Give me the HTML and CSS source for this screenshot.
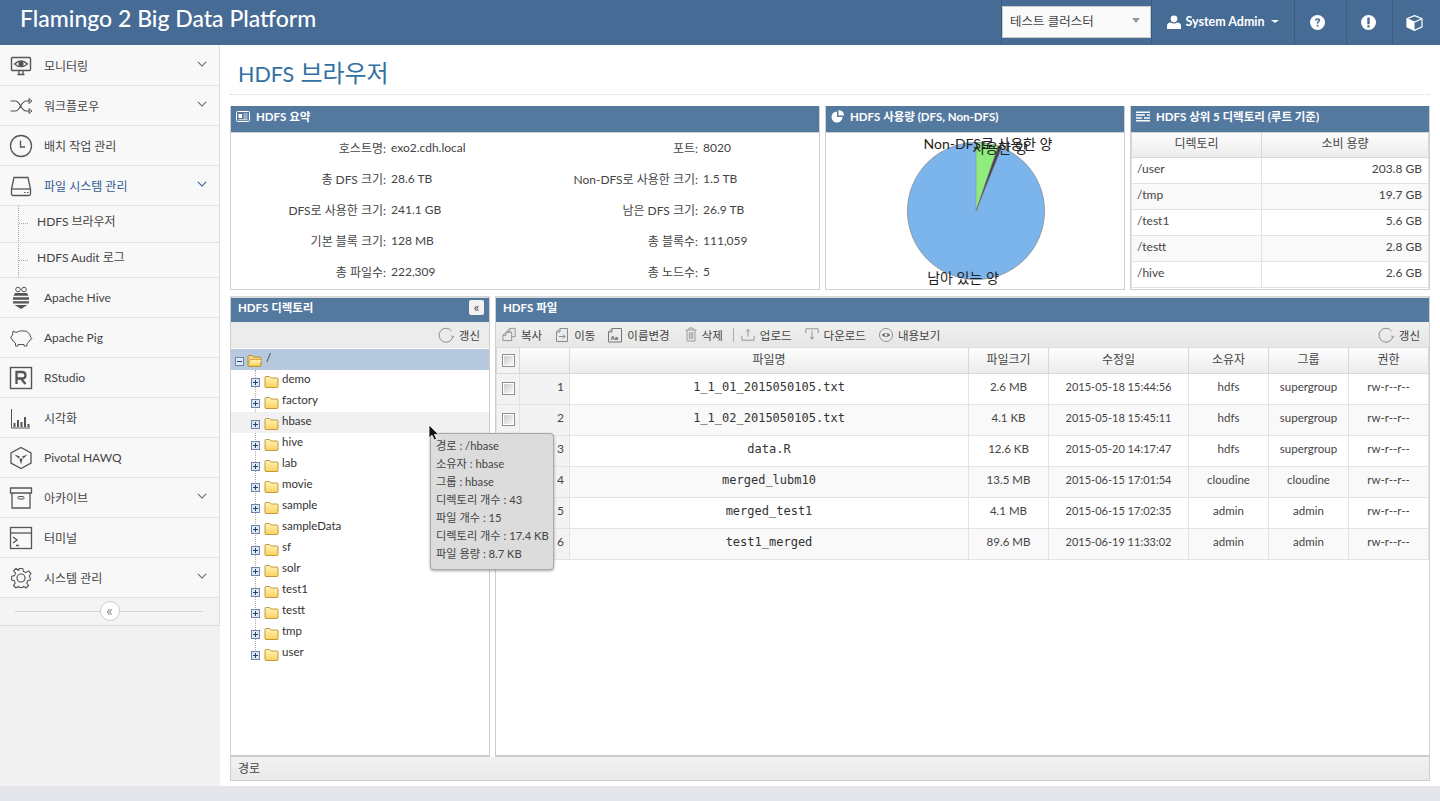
FILE: index.html
```html
<!DOCTYPE html>
<html lang="ko">
<head>
    <meta charset="UTF-8">
    <title>Flamingo 2 Big Data Platform</title>
    <link rel="stylesheet" href="styles.css">
</head>
<body>
    <svg class="sprites" width="0" height="0">
        <defs>
            <linearGradient id="folderFill" x1="0" y1="0" x2="0" y2="1">
                <stop offset="0" stop-color="#fff3b8"/>
                <stop offset="1" stop-color="#fbd35f"/>
            </linearGradient>
            <symbol id="i-folder" viewBox="0 0 15 13">
                <path d="M1 11.5V2.5Q1 1.5 2 1.5H5.5L7 3H13Q14 3 14 4V11.5Q14 12.5 13 12.5H2Q1 12.5 1 11.5Z" fill="url(#folderFill)" stroke="#c09a3c"/>
            </symbol>
            <symbol id="i-open" viewBox="0 0 15 13">
                <path d="M1 11.5V2.5Q1 1.5 2 1.5H5.5L7 3H13Q14 3 14 4V11.5Q14 12.5 13 12.5H2Q1 12.5 1 11.5Z" fill="#f3d27a" stroke="#b58f35"/>
                <path d="M1.2 12L3 5.5H14.5L13 12.2Z" fill="url(#folderFill)" stroke="#c09a3c" stroke-width=".7"/>
            </symbol>
            <symbol id="i-plus" viewBox="0 0 9 9">
                <rect x=".5" y=".5" width="8" height="8" fill="#dfe7f3" stroke="#6f86a8"/>
                <path d="M2 4.5H7M4.5 2V7" stroke="#24406e"/>
            </symbol>
            <symbol id="i-minus" viewBox="0 0 9 9">
                <rect x=".5" y=".5" width="8" height="8" fill="#dfe7f3" stroke="#6f86a8"/>
                <path d="M2 4.5H7" stroke="#24406e"/>
            </symbol>
            <symbol id="i-refresh" viewBox="0 0 16 16">
                <path d="M14.9 9.5A7 7 0 1 1 13.6 4" fill="none" stroke="#8d8d8d"/>
                <path d="M13.2 8.8L14.9 10.4L16 8.6" fill="none" stroke="#8d8d8d"/>
            </symbol>
            <symbol id="i-chevron" viewBox="0 0 12 7">
                <path d="M1 1L6 6L11 1" fill="none" stroke="currentColor" stroke-width="1.3"/>
            </symbol>
        </defs>
    </svg>

    <header class="topbar">
        <div class="brand">Flamingo 2 Big Data Platform</div>
        <div class="top-cell cluster-cell">
            <div class="cluster-select">
                <span>테스트 클러스터</span>
                <i class="caret-grey"></i>
            </div>
        </div>
        <div class="top-cell user-cell">
            <svg width="14" height="14" viewBox="0 0 14 14"><circle cx="7" cy="3.8" r="3.4" fill="#fff"/><path d="M0 14V11Q0 7.6 3.5 7.4Q7 9.6 10.5 7.4Q14 7.6 14 11V14Z" fill="#fff"/></svg>
            <span>System Admin</span>
            <i class="caret-white"></i>
        </div>
        <div class="top-cell icon-cell help-cell">
            <svg width="15" height="15" viewBox="0 0 15 15"><circle cx="7.5" cy="7.5" r="7.5" fill="#fff"/><path d="M4.8 5.6Q5 3.2 7.6 3.2Q10.2 3.3 10.2 5.3Q10.2 6.5 8.9 7.2Q8 7.7 8 8.8H6.8Q6.7 7 7.8 6.3Q8.6 5.8 8.5 5.3Q8.4 4.7 7.6 4.7Q6.6 4.7 6.5 5.8Z" fill="#466b94"/><rect x="6.7" y="9.8" width="1.7" height="1.8" fill="#466b94"/></svg>
        </div>
        <div class="top-cell icon-cell alert-cell">
            <svg width="15" height="15" viewBox="0 0 15 15"><circle cx="7.5" cy="7.5" r="7.5" fill="#fff"/><rect x="6.3" y="2.6" width="2.4" height="6.6" rx=".5" fill="#466b94"/><rect x="6.3" y="10.2" width="2.4" height="2.2" rx=".4" fill="#466b94"/></svg>
        </div>
        <div class="top-cell icon-cell box-cell">
            <svg width="17" height="16" viewBox="0 0 17 16"><path d="M8.5 .6L16 3.6V11.8L8.5 15.4L1 11.8V3.6Z" fill="none" stroke="#fff" stroke-width="1.2"/><path d="M1 3.8L8.5 7L16 3.8" fill="none" stroke="#fff" stroke-width="1.2"/><path d="M1 3.8L8.5 7V15.4L1 11.8Z" fill="#fff"/></svg>
        </div>
    </header>

    <div class="layout">
        <aside class="sidebar">
            <nav class="menu">
                <a class="menu-item">
                    <svg class="menu-icon" width="24" height="22" viewBox="0 0 24 22"><rect x="2.5" y="2.5" width="19" height="13" rx="1" fill="none" stroke="#555" stroke-width="1.4"/><path d="M5.5 9Q12 3 18.5 9Q12 14.5 5.5 9Z" fill="none" stroke="#555" stroke-width="1.2"/><circle cx="12" cy="9" r="2.6" fill="#555"/><path d="M8.5 19.5H15.5M10 16V19.5M14 16V19.5" stroke="#555" stroke-width="1.3"/></svg>
                    <span class="menu-label">모니터링</span>
                    <svg class="menu-arrow" viewBox="0 0 12 7"><use href="#i-chevron"/></svg>
                </a>
                <a class="menu-item">
                    <svg class="menu-icon" width="24" height="22" viewBox="0 0 24 22"><path d="M1.5 6H6.5C11 6 12 16 17 16H21M1.5 16H6.5C11 16 12 6 17 6H21" fill="none" stroke="#555" stroke-width="1.2"/><path d="M20 3.5L23 6L20 8.5ZM20 13.5L23 16L20 18.5Z" fill="none" stroke="#555"/></svg>
                    <span class="menu-label">워크플로우</span>
                    <svg class="menu-arrow" viewBox="0 0 12 7"><use href="#i-chevron"/></svg>
                </a>
                <a class="menu-item">
                    <svg class="menu-icon" width="24" height="24" viewBox="0 0 24 24"><circle cx="12" cy="12" r="10.5" fill="none" stroke="#555" stroke-width="1.3"/><path d="M11.5 6.5V13H16" fill="none" stroke="#555" stroke-width="1.3"/></svg>
                    <span class="menu-label">배치 작업 관리</span>
                </a>
                <a class="menu-item is-open">
                    <svg class="menu-icon" width="24" height="24" viewBox="0 0 24 24"><path d="M2.5 15L5 3.5H19L21.5 15V20Q21.5 21.5 20 21.5H4Q2.5 21.5 2.5 20Z" fill="none" stroke="#555" stroke-width="1.3"/><path d="M2.5 15H21.5" stroke="#555" stroke-width="1.3"/><path d="M15 18.5H16.5M18 18.5H19.5" stroke="#555" stroke-width="1.2"/></svg>
                    <span class="menu-label">파일 시스템 관리</span>
                    <svg class="menu-arrow" viewBox="0 0 12 7"><use href="#i-chevron"/></svg>
                </a>
                <div class="submenu">
                    <a class="submenu-item">HDFS 브라우저</a>
                    <a class="submenu-item">HDFS Audit 로그</a>
                </div>
                <a class="menu-item">
                    <svg class="menu-icon" width="24" height="24" viewBox="0 0 24 24"><circle cx="9" cy="3.5" r="2.3" fill="none" stroke="#555"/><circle cx="15" cy="3.5" r="2.3" fill="none" stroke="#555"/><path d="M6 7H18L20 11V18L12 23L4 18V11Z" fill="#555"/><path d="M4 10.5H20M4 14.5H20M4 18.2H20" stroke="#f7f7f7" stroke-width="1.5"/></svg>
                    <span class="menu-label">Apache Hive</span>
                </a>
                <a class="menu-item">
                    <svg class="menu-icon" width="24" height="22" viewBox="0 0 24 22"><path d="M4 4L7 5.5Q11 3 16 4Q21 5.5 21.5 10L23 11.5L21 13Q20 15.5 18 16.5V19H15V17.5H9V19H6.5V16Q3.5 14.5 3 12L1.5 11L3.5 8Z" fill="none" stroke="#555"/></svg>
                    <span class="menu-label">Apache Pig</span>
                </a>
                <a class="menu-item">
                    <svg class="menu-icon" width="24" height="24" viewBox="0 0 24 24"><rect x="1.5" y="1.5" width="21" height="21" fill="none" stroke="#555" stroke-width="1.4"/><path d="M7.5 18V6H13Q16.5 6 16.5 9.5Q16.5 12.5 13 12.5H7.5M12 12.5L16.5 18" fill="none" stroke="#555" stroke-width="2.3"/></svg>
                    <span class="menu-label">RStudio</span>
                </a>
                <a class="menu-item">
                    <svg class="menu-icon" width="24" height="24" viewBox="0 0 24 24"><path d="M2.5 3V22H21" fill="none" stroke="#555"/><path d="M5.5 21V17M9 21V14M12.5 21V16M16 21V11M19.5 21V18" stroke="#555" stroke-width="2"/></svg>
                    <span class="menu-label">시각화</span>
                </a>
                <a class="menu-item">
                    <svg class="menu-icon" width="24" height="24" viewBox="0 0 24 24"><path d="M12 1.5L22 7V17L12 22.5L2 17V7Z" fill="none" stroke="#555" stroke-width="1.3"/><path d="M5.5 8.5L11 10.5L9.5 12.5ZM18.5 8.5L13 10.5L14.5 12.5ZM10.3 12.5H13.7L12 18.5Z" fill="#555"/></svg>
                    <span class="menu-label">Pivotal HAWQ</span>
                </a>
                <a class="menu-item">
                    <svg class="menu-icon" width="24" height="24" viewBox="0 0 24 24"><path d="M1.5 2H22.5V7H1.5ZM3 7V22H21V7" fill="none" stroke="#555" stroke-width="1.3"/><rect x="9" y="10.5" width="6" height="2.5" rx="1" fill="none" stroke="#555"/></svg>
                    <span class="menu-label">아카이브</span>
                    <svg class="menu-arrow" viewBox="0 0 12 7"><use href="#i-chevron"/></svg>
                </a>
                <a class="menu-item">
                    <svg class="menu-icon" width="24" height="24" viewBox="0 0 24 24"><rect x="1.5" y="1.5" width="21" height="21" fill="none" stroke="#555" stroke-width="1.3"/><path d="M1.5 7H22.5" stroke="#555" stroke-width="1.3"/><path d="M4 11L8 14L4 17M7 19.5H10" fill="none" stroke="#555" stroke-width="1.3"/></svg>
                    <span class="menu-label">터미널</span>
                </a>
                <a class="menu-item">
                    <svg class="menu-icon" width="24" height="24" viewBox="0 0 24 24"><circle cx="12" cy="12" r="4" fill="none" stroke="#555" stroke-width="1.2"/><path d="M10.2 2.5H13.8L14.4 5.5L16.9 6.6L19.5 4.9L22 7.5L20.3 10L21.4 12.6L21.4 14L18.8 14.6L17.8 17.1L19.5 19.5L17 22L14.5 20.3L13.8 21.5H10.2L9.5 20.3L7 22L4.5 19.5L6.2 17.1L5.2 14.6L2.6 14V10.2L5.5 9.6L6.6 7.1L4.5 4.9L7 2.4L9.6 4.5Z" fill="none" stroke="#555" stroke-width="1.1" stroke-linejoin="round"/></svg>
                    <span class="menu-label">시스템 관리</span>
                    <svg class="menu-arrow" viewBox="0 0 12 7"><use href="#i-chevron"/></svg>
                </a>
            </nav>
            <div class="collapse-row">
                <span class="collapse-btn">«</span>
            </div>
        </aside>

        <main class="content">
            <h1 class="page-title"><span class="title-latin">HDFS</span> 브라우저</h1>

            <section class="top-row">
                <div class="panel">
                    <div class="panel-head">
                        <svg width="14" height="11" viewBox="0 0 14 11"><rect x=".5" y=".5" width="13" height="10" rx="1" fill="none" stroke="#fff"/><rect x="2.5" y="3" width="3.5" height="4" fill="#fff"/><path d="M7.5 3H11.5M7.5 5H11.5M7.5 7H11.5M2.5 8.7H11.5" stroke="#fff" stroke-width=".8"/></svg>
                        <span>HDFS 요약</span>
                    </div>
                    <div class="summary">
                        <div class="s-label">호스트명:</div><div>exo2.cdh.local</div><div class="s-label">포트:</div><div>8020</div>
                        <div class="s-label">총 DFS 크기:</div><div>28.6 TB</div><div class="s-label">Non-DFS로 사용한 크기:</div><div>1.5 TB</div>
                        <div class="s-label">DFS로 사용한 크기:</div><div>241.1 GB</div><div class="s-label">남은 DFS 크기:</div><div>26.9 TB</div>
                        <div class="s-label">기본 블록 크기:</div><div>128 MB</div><div class="s-label">총 블록수:</div><div>111,059</div>
                        <div class="s-label">총 파일수:</div><div>222,309</div><div class="s-label">총 노드수:</div><div>5</div>
                    </div>
                </div>

                <div class="panel">
                    <div class="panel-head">
                        <svg width="13" height="13" viewBox="0 0 13 13"><path d="M6 1.5A5.5 5.5 0 1 0 11.5 7H6Z" fill="#fff"/><path d="M7.5 0A5.5 5.5 0 0 1 13 5.5H7.5Z" fill="#fff"/></svg>
                        <span>HDFS 사용량 (DFS, Non-DFS)</span>
                    </div>
                    <div class="pie-box">
                        <svg class="pie" width="298" height="156" viewBox="0 0 298 156">
                            <circle cx="150" cy="78" r="68.5" fill="#7cb4ec" stroke="#8f9aa5"/>
                            <path d="M150 78V9.5A68.5 68.5 0 0 1 172.3 13.2Z" fill="#90ed7d" stroke="#8f9aa5" stroke-width=".8"/>
                            <path d="M150 78L172.3 13.2A68.5 68.5 0 0 1 175.6 14.5Z" fill="#434348" stroke="#777" stroke-width=".6"/>
                            <text class="pie-text" x="162" y="16" text-anchor="middle">Non-DFS로 사용한 양</text>
                            <text class="pie-text" x="174" y="20" text-anchor="middle">사용한 양</text>
                            <text class="pie-text" x="137" y="150" text-anchor="middle">남아 있는 양</text>
                        </svg>
                    </div>
                </div>

                <div class="panel">
                    <div class="panel-head">
                        <svg width="14" height="11" viewBox="0 0 14 11"><path d="M0 1.2H14M0 4H9M11 4H14M0 7H6M8 7H14M0 9.8H14" stroke="#fff" stroke-width="1.6"/></svg>
                        <span>HDFS 상위 5 디렉토리 (루트 기준)</span>
                    </div>
                    <table class="grid top-dirs">
                        <thead>
                            <tr><th class="col-dir">디렉토리</th><th>소비 용량</th></tr>
                        </thead>
                        <tbody>
                            <tr><td>/user</td><td class="right">203.8 GB</td></tr>
                            <tr><td>/tmp</td><td class="right">19.7 GB</td></tr>
                            <tr><td>/test1</td><td class="right">5.6 GB</td></tr>
                            <tr><td>/testt</td><td class="right">2.8 GB</td></tr>
                            <tr><td>/hive</td><td class="right">2.6 GB</td></tr>
                        </tbody>
                    </table>
                </div>
            </section>

            <section class="bottom-row">
                <div class="panel dir-panel">
                    <div class="panel-head panel-head-tall">
                        <span>HDFS 디렉토리</span>
                        <span class="fold-btn">«</span>
                    </div>
                    <div class="toolbar toolbar-end">
                        <a class="tool"><svg width="16" height="16"><use href="#i-refresh"/></svg>갱신</a>
                    </div>
                    <div class="tree">
                        <div class="tree-row tree-root">
                            <svg width="9" height="9"><use href="#i-minus"/></svg>
                            <svg class="folder" width="15" height="13"><use href="#i-open"/></svg>
                            <span>/</span>
                        </div>
                        <div class="tree-children">
                            <div class="tree-row"><svg width="9" height="9"><use href="#i-plus"/></svg><svg class="folder" width="15" height="13"><use href="#i-folder"/></svg><span>demo</span></div>
                            <div class="tree-row"><svg width="9" height="9"><use href="#i-plus"/></svg><svg class="folder" width="15" height="13"><use href="#i-folder"/></svg><span>factory</span></div>
                            <div class="tree-row is-hover"><svg width="9" height="9"><use href="#i-plus"/></svg><svg class="folder" width="15" height="13"><use href="#i-folder"/></svg><span>hbase</span></div>
                            <div class="tree-row"><svg width="9" height="9"><use href="#i-plus"/></svg><svg class="folder" width="15" height="13"><use href="#i-folder"/></svg><span>hive</span></div>
                            <div class="tree-row"><svg width="9" height="9"><use href="#i-plus"/></svg><svg class="folder" width="15" height="13"><use href="#i-folder"/></svg><span>lab</span></div>
                            <div class="tree-row"><svg width="9" height="9"><use href="#i-plus"/></svg><svg class="folder" width="15" height="13"><use href="#i-folder"/></svg><span>movie</span></div>
                            <div class="tree-row"><svg width="9" height="9"><use href="#i-plus"/></svg><svg class="folder" width="15" height="13"><use href="#i-folder"/></svg><span>sample</span></div>
                            <div class="tree-row"><svg width="9" height="9"><use href="#i-plus"/></svg><svg class="folder" width="15" height="13"><use href="#i-folder"/></svg><span>sampleData</span></div>
                            <div class="tree-row"><svg width="9" height="9"><use href="#i-plus"/></svg><svg class="folder" width="15" height="13"><use href="#i-folder"/></svg><span>sf</span></div>
                            <div class="tree-row"><svg width="9" height="9"><use href="#i-plus"/></svg><svg class="folder" width="15" height="13"><use href="#i-folder"/></svg><span>solr</span></div>
                            <div class="tree-row"><svg width="9" height="9"><use href="#i-plus"/></svg><svg class="folder" width="15" height="13"><use href="#i-folder"/></svg><span>test1</span></div>
                            <div class="tree-row"><svg width="9" height="9"><use href="#i-plus"/></svg><svg class="folder" width="15" height="13"><use href="#i-folder"/></svg><span>testt</span></div>
                            <div class="tree-row"><svg width="9" height="9"><use href="#i-plus"/></svg><svg class="folder" width="15" height="13"><use href="#i-folder"/></svg><span>tmp</span></div>
                            <div class="tree-row"><svg width="9" height="9"><use href="#i-plus"/></svg><svg class="folder" width="15" height="13"><use href="#i-folder"/></svg><span>user</span></div>
                        </div>
                    </div>
                </div>

                <div class="panel file-panel">
                    <div class="panel-head panel-head-tall"><span>HDFS 파일</span></div>
                    <div class="toolbar">
                        <a class="tool"><svg width="14" height="15" viewBox="0 0 16 16"><path d="M5.5 4.5L9 1H15V10.5H11M5.5 4.5H9V1M1 9L4.5 5.5H11V15H1ZM4.5 5.5V9H1" fill="none" stroke="#8a8a8a"/></svg>복사</a>
                        <a class="tool"><svg width="14" height="16" viewBox="0 0 14 16"><path d="M1.5 14.5V5L5 1.5H12.5V14.5ZM5 1.5V5H1.5M4 9.5H10M8 7.5L10 9.5L8 11.5" fill="none" stroke="#8a8a8a"/></svg>이동</a>
                        <a class="tool tool-rename"><svg width="14" height="16" viewBox="0 0 14 16"><path d="M.5 15V5L4 1.5H13.5V15ZM4 1.5V5H.5" fill="none" stroke="#777"/><text class="tool-aa" x="2.5" y="12.5">Aa</text></svg>이름변경</a>
                        <a class="tool"><svg width="12" height="15" viewBox="0 0 12 15"><path d="M.5 3H11.5M4 3V1H8V3M2 3V14H10V3M4.3 5V12M6 5V12M7.7 5V12" fill="none" stroke="#9a9a9a"/></svg>삭제</a>
                        <i class="tool-sep"></i>
                        <a class="tool"><svg width="14" height="15" viewBox="0 0 16 15"><path d="M1 9V14H15V9M8 10V2M6 4L8 1.5L10 4" fill="none" stroke="#8a8a8a"/></svg>업로드</a>
                        <a class="tool"><svg width="14" height="15" viewBox="0 0 16 15"><path d="M1 6V1H15V6M8 3V12M6 10L8 13L10 10" fill="none" stroke="#8a8a8a"/></svg>다운로드</a>
                        <a class="tool"><svg width="14" height="14" viewBox="0 0 16 16"><circle cx="8" cy="8" r="7.5" fill="none" stroke="#888"/><path d="M3 8Q8 3.5 13 8Q8 12.5 3 8Z" fill="#666"/><circle cx="8" cy="8" r="1.6" fill="#eee"/></svg>내용보기</a>
                        <a class="tool tool-end"><svg width="16" height="16"><use href="#i-refresh"/></svg>갱신</a>
                    </div>
                    <table class="grid files">
                        <colgroup>
                            <col class="c-check"><col class="c-num"><col><col class="c-size"><col class="c-date"><col class="c-who"><col class="c-who"><col class="c-who">
                        </colgroup>
                        <thead>
                            <tr><th class="cell-check"><i class="checkbox"></i></th><th></th><th>파일명</th><th>파일크기</th><th>수정일</th><th>소유자</th><th>그룹</th><th>권한</th></tr>
                        </thead>
                        <tbody>
                            <tr><td class="cell-check"><i class="checkbox"></i></td><td class="cell-num">1</td><td class="mono">1_1_01_2015050105.txt</td><td class="center">2.6 MB</td><td class="center date">2015-05-18 15:44:56</td><td class="center">hdfs</td><td class="center">supergroup</td><td class="center">rw-r--r--</td></tr>
                            <tr><td class="cell-check"><i class="checkbox"></i></td><td class="cell-num">2</td><td class="mono">1_1_02_2015050105.txt</td><td class="center">4.1 KB</td><td class="center date">2015-05-18 15:45:11</td><td class="center">hdfs</td><td class="center">supergroup</td><td class="center">rw-r--r--</td></tr>
                            <tr><td class="cell-check"><i class="checkbox"></i></td><td class="cell-num">3</td><td class="mono">data.R</td><td class="center">12.6 KB</td><td class="center date">2015-05-20 14:17:47</td><td class="center">hdfs</td><td class="center">supergroup</td><td class="center">rw-r--r--</td></tr>
                            <tr><td class="cell-check"><i class="checkbox"></i></td><td class="cell-num">4</td><td class="mono">merged_lubm10</td><td class="center">13.5 MB</td><td class="center date">2015-06-15 17:01:54</td><td class="center">cloudine</td><td class="center">cloudine</td><td class="center">rw-r--r--</td></tr>
                            <tr><td class="cell-check"><i class="checkbox"></i></td><td class="cell-num">5</td><td class="mono">merged_test1</td><td class="center">4.1 MB</td><td class="center date">2015-06-15 17:02:35</td><td class="center">admin</td><td class="center">admin</td><td class="center">rw-r--r--</td></tr>
                            <tr><td class="cell-check"><i class="checkbox"></i></td><td class="cell-num">6</td><td class="mono">test1_merged</td><td class="center">89.6 MB</td><td class="center date">2015-06-19 11:33:02</td><td class="center">admin</td><td class="center">admin</td><td class="center">rw-r--r--</td></tr>
                        </tbody>
                    </table>
                </div>

                <div class="path-bar">경로</div>

                <div class="tree-tip">
                    <div>경로 : /hbase</div>
                    <div>소유자 : hbase</div>
                    <div>그룹 : hbase</div>
                    <div>디렉토리 개수 : 43</div>
                    <div>파일 개수 : 15</div>
                    <div>디렉토리 개수 : 17.4 KB</div>
                    <div>파일 용량 : 8.7 KB</div>
                </div>
                <svg class="cursor" width="12" height="17" viewBox="0 0 12 17"><path d="M1 1V14L4 11.2L6.3 16L8.6 15L6.4 10.4H10.6Z" fill="#111" stroke="#fff" stroke-width=".8"/></svg>
            </section>
        </main>
    </div>
    <div class="page-foot"></div>
</body>
</html>
```

FILE: styles.css
```css
:root {
    --bar-blue: #466b94;
    --panel-blue: #54799f;
    --line: #cfcfcf;
    --text: #333333;
}

* {
    box-sizing: border-box;
}

html, body {
    height: 100%;
}

body {
    margin: 0;
    height: 801px;
    overflow: hidden;
    display: flex;
    flex-direction: column;
    font-family: 'Lato', 'Noto Sans CJK KR', sans-serif;
    font-size: 12px;
    color: var(--text);
    background: #e4e6eb;
}

.sprites {
    position: absolute;
}

/* top bar */
.topbar {
    height: 45px;
    flex: none;
    display: flex;
    align-items: stretch;
    background: var(--bar-blue);
    color: #fff;
}

.brand {
    flex: 1;
    padding: 2px 0 0 20px;
    font-size: 23px;
    font-weight: 500;
    line-height: 32px;
}

.top-cell {
    display: flex;
    align-items: center;
    justify-content: center;
    border-left: 1px solid #3a5a80;
}

.cluster-cell {
    width: 150px;
    padding-top: 6px;
    align-items: flex-start;
    justify-content: flex-start;
}

.cluster-select {
    width: 149px;
    height: 32px;
    padding: 0 8px 3px 7px;
    display: flex;
    align-items: center;
    justify-content: space-between;
    background: #fafafa;
    border: 1px solid #ccc;
    color: #444;
    font-size: 12.5px;
}

.caret-grey {
    margin-right: 2px;
    border-top: 5px solid #999;
    border-left: 4.5px solid transparent;
    border-right: 4.5px solid transparent;
}

.user-cell {
    width: 143px;
    padding-bottom: 2px;
    gap: 4px;
    font-size: 12.5px;
    font-weight: 700;
}

.caret-white {
    margin-left: 2px;
    border-top: 3.5px solid #fff;
    border-left: 4px solid transparent;
    border-right: 4px solid transparent;
}

.help-cell {
    width: 52px;
    padding-right: 6px;
}

.alert-cell {
    width: 46px;
    padding-right: 2px;
}

.box-cell {
    width: 48px;
    padding-right: 4px;
}

/* layout */
.layout {
    height: 741px;
    flex: none;
    display: flex;
    background: #fff;
}

.sidebar {
    width: 220px;
    flex: none;
    background: #f1f1f1;
}

.menu {
    padding-top: 1px;
    background: #f8f8f8;
    border-right: 1px solid #ddd;
}

.menu-item {
    height: 40px;
    padding: 0 12px 0 9px;
    display: flex;
    align-items: center;
    background: #f8f8f8;
    border-bottom: 1px solid #e2e2e2;
    color: #444;
    font-size: 12px;
}

.menu-icon {
    flex: none;
    width: 24px;
    margin-right: 11px;
}

.menu-label {
    flex: 1;
}

.menu-arrow {
    width: 10px;
    height: 6px;
    color: #666;
    margin-top: -3px;
}

.is-open {
    color: #2e5a92;
}

.is-open .menu-arrow {
    color: #2e5a92;
}

.submenu {
    position: relative;
    height: 72px;
    background: #f8f8f8;
    border-bottom: 1px solid #e2e2e2;
}

.submenu::before {
    content: "";
    position: absolute;
    left: 18px;
    top: 0;
    bottom: 0;
    border-left: 1px dotted #9aa6bb;
}

.submenu-item {
    position: relative;
    display: flex;
    align-items: center;
    height: 36px;
    padding: 0 0 8px 37px;
    color: #444;
    font-size: 12px;
}

.submenu-item + .submenu-item {
    height: 35px;
    border-top: 1px dotted #ccc;
}

.submenu-item::before {
    content: "";
    position: absolute;
    left: 19px;
    top: 17px;
    width: 9px;
    border-top: 1px dotted #aaa;
}

.collapse-row {
    height: 28px;
    position: relative;
    display: flex;
    align-items: center;
    justify-content: center;
    background: #f4f4f4;
    border-right: 1px solid #ddd;
    border-bottom: 1px solid #ddd;
}

.collapse-row::before {
    content: "";
    position: absolute;
    left: 15px;
    right: 16px;
    top: 13px;
    border-top: 1px solid #d6d6d6;
}

.collapse-btn {
    position: relative;
    width: 20px;
    height: 20px;
    margin-top: -2px;
    padding-bottom: 2px;
    display: flex;
    align-items: center;
    justify-content: center;
    background: #fff;
    border: 1px solid #ccc;
    border-radius: 50%;
    color: #888;
    font-size: 16px;
    line-height: 1;
}

/* main */
.content {
    flex: 1;
    min-width: 0;
    padding: 0 10px 5px;
    display: flex;
    flex-direction: column;
}

.page-title {
    height: 50px;
    margin: 0 0 11px;
    padding: 10px 0 0 8px;
    border-bottom: 1px dotted #d5d5d5;
    color: #33709f;
    font-size: 24px;
    font-weight: 400;
    line-height: 36px;
}

.title-latin {
    font-size: 21.5px;
}

.top-row {
    height: 184px;
    flex: none;
    display: grid;
    grid-template-columns: 590px 300px 300px;
    gap: 5px;
}

.panel {
    display: flex;
    flex-direction: column;
    min-width: 0;
    overflow: hidden;
    background: #fff;
    border: 1px solid var(--line);
    border-top: 0;
}

.panel-head {
    height: 27px;
    flex: none;
    margin: 0 -1px;
    padding: 0 0 6px 6px;
    display: flex;
    align-items: center;
    gap: 5px;
    background: var(--panel-blue);
    border-bottom: 1px solid var(--line);
    color: #fff;
    font-size: 11.5px;
    font-weight: 700;
}

.panel-head svg {
    margin-right: 1px;
}

.summary {
    flex: 1;
    margin-top: -1px;
    padding-bottom: 2px;
    display: grid;
    grid-template-columns: 155px 150px 152px 1fr;
    grid-auto-rows: 1fr;
    align-items: center;
    column-gap: 5px;
    color: #444;
}

.s-label {
    text-align: right;
}

.pie-box {
    flex: 1;
}

.pie {
    display: block;
}

.pie-text {
    font-size: 14px;
    fill: #222;
}

/* tables */
.grid {
    width: 100%;
    border-collapse: collapse;
    table-layout: fixed;
    font-size: 12px;
}

.grid th {
    height: 24px;
    padding: 0 0 4px;
    background: linear-gradient(#fdfdfd, #ececec);
    border: 1px solid #d8d8d8;
    border-top: 0;
    font-weight: 400;
    color: #444;
}

.grid td {
    padding: 0 6px;
    border: 1px solid #e3e3e3;
    border-top: 0;
    color: #444;
}

.grid tr:nth-child(even) td {
    background: #f9f9f9;
}

.top-dirs td {
    height: 26px;
    padding: 0 6px 4px 5px;
}

.col-dir {
    width: 130px;
}

.right {
    text-align: right;
}

.center {
    text-align: center;
    font-size: 11.5px;
}

.date {
    font-size: 11px;
}

/* bottom panels */
.bottom-row {
    position: relative;
    flex: 1;
    min-height: 0;
    margin-top: 6px;
    display: grid;
    grid-template-columns: 260px 935px;
    grid-template-rows: 1fr 24px;
    column-gap: 5px;
}

.dir-panel, .file-panel {
    border-bottom: 2px solid #ccc;
}

.panel-head-tall {
    height: 26px;
    padding: 0 6px 6px 8px;
    justify-content: space-between;
    border-top: 2px solid #d9d9d9;
    border-bottom: 0;
}

.fold-btn {
    width: 15px;
    height: 15px;
    display: flex;
    align-items: center;
    justify-content: center;
    background: #f2f2f2;
    border-radius: 2px;
    color: #555;
    font-size: 14px;
    font-weight: 400;
    line-height: 1;
}

.toolbar {
    height: 26px;
    flex: none;
    padding: 0 9px 0 6px;
    display: flex;
    align-items: center;
    gap: 13px;
    background: linear-gradient(#f0f0f0, #e6e6e6);
    border-bottom: 1px solid #ddd;
    font-size: 11.5px;
}

.toolbar-end {
    justify-content: flex-end;
    background: #ececec;
    border-bottom: 0;
}

.tool {
    display: flex;
    align-items: center;
    gap: 5px;
    color: #444;
}

.tool-rename {
    margin-right: 2px;
}

.tool-aa {
    font-family: 'Liberation Sans', sans-serif;
    font-size: 6px;
    font-weight: 700;
    fill: #555;
}

.tool-sep {
    height: 14px;
    margin: 0 -6px 0 -3px;
    border-left: 1px solid #aaa;
}

.tool-end {
    margin-left: auto;
}

.tree {
    flex: 1;
    padding-top: 1px;
}

.tree-row {
    height: 21px;
    padding: 0 0 0 4px;
    display: flex;
    align-items: center;
    font-size: 11.5px;
    color: #333;
}

.tree-row > svg:first-child {
    flex: none;
    margin-top: 3px;
}

.tree-row span {
    margin: -5px 0 0 4px;
}

.folder {
    flex: none;
    margin: 2px 0 0 3px;
}

.tree-root {
    background: #b7c9de;
}

.tree-children {
    position: relative;
}

.tree-children::before {
    content: "";
    position: absolute;
    left: 24px;
    top: 0;
    bottom: 8px;
    border-left: 1px dotted #aaa;
}

.tree-children .tree-row {
    position: relative;
    padding-left: 20px;
}

.tree-children .folder {
    margin-left: 4px;
}

.tree-children .tree-row span {
    margin-left: 3px;
}

.tree-row.is-hover {
    background: #f1f1f1;
}

.file-panel .panel-head {
    gap: 0;
}

.c-check {
    width: 23px;
}

.c-num {
    width: 50px;
}

.c-size {
    width: 80px;
}

.c-date {
    width: 140px;
}

.c-who {
    width: 80px;
}

.files th {
    height: 25px;
    padding-bottom: 3px;
}

.files td {
    height: 31px;
    padding: 0 2px 4px;
}

.files .center {
    padding-bottom: 5px;
}

.files .cell-check, .files .cell-num {
    background: #f3f3f3;
}

.files tr:nth-child(even) .cell-check, .files tr:nth-child(even) .cell-num {
    background: #f3f3f3;
}

.cell-check {
    text-align: center;
    padding: 0 !important;
}

.cell-num {
    text-align: right;
    padding-right: 5px !important;
}

.checkbox {
    display: inline-block;
    width: 13px;
    height: 13px;
    margin-top: 3px;
    background: linear-gradient(135deg, #c9c9c9, #fbfbfb);
    border: 1px solid #8e8e8e;
    box-shadow: inset 0 0 0 1px #fff;
}

.mono {
    font-family: 'DejaVu Sans Mono', 'Liberation Mono', monospace;
    font-size: 12px;
    text-align: center;
    color: #333 !important;
}

.path-bar {
    grid-column: 1 / 2;
    padding: 0 7px 2px;
    display: flex;
    align-items: center;
    width: 1200px;
    background: linear-gradient(#f2f2f2, #e9e9e9);
    border: 1px solid var(--line);
    border-top: 0;
    font-size: 12px;
    color: #444;
}

/* hover tooltip of the directory tree */
.tree-tip {
    position: absolute;
    left: 200px;
    top: 137px;
    width: 124px;
    height: 137px;
    padding: 3px 5px;
    background: #dcdcdc;
    border: 1px solid #aaa;
    border-radius: 4px;
    box-shadow: 0 1px 3px rgba(0, 0, 0, 0.35);
    color: #444;
    font-size: 11.2px;
    line-height: 18px;
    white-space: nowrap;
}

.cursor {
    position: absolute;
    left: 198px;
    top: 128px;
}

.page-foot {
    flex: 1;
    background: #e4e6eb;
}
```
